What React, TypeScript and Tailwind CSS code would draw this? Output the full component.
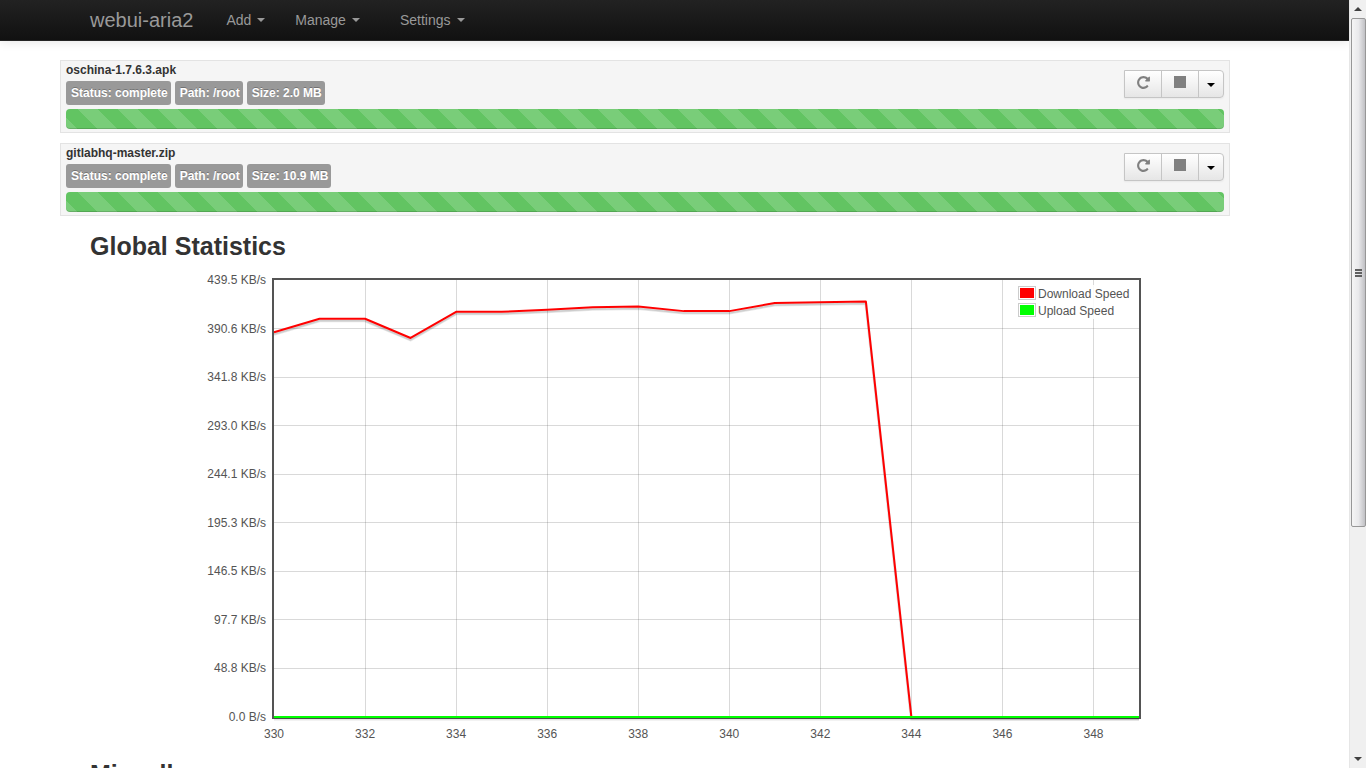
type Download = {
  name: string;
  status: string;
  path: string;
  size: string;
};

const downloads: Download[] = [
  { name: "oschina-1.7.6.3.apk", status: "complete", path: "/root", size: "2.0 MB" },
  { name: "gitlabhq-master.zip", status: "complete", path: "/root", size: "10.9 MB" },
];

const menus = [
  { label: "Add", style: "mr-[30px]" },
  { label: "Manage", style: "mr-10" },
  { label: "Settings", style: "" },
];

// Speeds in KB/s, one sample per tick starting at FIRST_TICK
const FIRST_TICK = 330;
const LAST_TICK = 349;
const MAX_SPEED = 439.5;
const downloadSpeed = [
  387, 400.5, 400.5, 381.2, 407.5, 407.5, 409.5, 412, 412.8, 408.2, 408.2, 416.4,
  417.2, 418, 0, 0, 0, 0, 0, 0,
];
const uploadSpeed = downloadSpeed.map(() => 0);
const speedLabels = [
  "439.5 KB/s",
  "390.6 KB/s",
  "341.8 KB/s",
  "293.0 KB/s",
  "244.1 KB/s",
  "195.3 KB/s",
  "146.5 KB/s",
  "97.7 KB/s",
  "48.8 KB/s",
  "0.0 B/s",
];
const tickLabels = [330, 332, 334, 336, 338, 340, 342, 344, 346, 348];

const plot = { left: 74, top: 10, width: 865, height: 437 };

const xAt = (tick: number) =>
  plot.left + ((tick - FIRST_TICK) / (LAST_TICK - FIRST_TICK)) * plot.width;
const yAt = (speed: number) =>
  plot.top + (1 - speed / MAX_SPEED) * plot.height;
const rowAt = (i: number) =>
  plot.top + (i / (speedLabels.length - 1)) * plot.height;

const toPoints = (values: number[]) =>
  values.map((v, i) => `${xAt(FIRST_TICK + i)},${yAt(v)}`).join(" ");

const Caret = ({ style }: { style: string }) => (
  <svg viewBox="0 0 8 4" className={`w-2 h-1 ${style}`} aria-hidden="true">
    <path d="M0 0h8L4 4z" fill="currentColor" />
  </svg>
);

const RepeatIcon = () => (
  <svg viewBox="0 0 1792 1792" className="w-[15px] h-[15px]" aria-hidden="true">
    <path
      fill="currentColor"
      d="M1664 256v448q0 26-19 45t-45 19h-448q-42 0-59-40-17-39 14-69l138-138q-148-137-349-137-104 0-198.5 40.5t-163.5 109.5-109.5 163.5-40.5 198.5 40.5 198.5 109.5 163.5 163.5 109.5 198.5 40.5q119 0 225-52t179-147q7-10 23-12 15 0 25 9l137 138q9 8 9.5 20.5t-7.5 22.5q-109 132-264 204.5t-327 72.5q-156 0-298-61t-245-164-164-245-61-298 61-298 164-245 245-164 298-61q147 0 284.5 55.5t244.5 156.5l130-129q29-31 70-14 39 17 39 59z"
    />
  </svg>
);

const StopIcon = () => (
  <svg viewBox="0 0 12 12" className="w-3 h-3" aria-hidden="true">
    <path d="M0 0h12v12H0z" fill="currentColor" />
  </svg>
);

const Navbar = () => (
  <nav className="flex items-center h-[41px] px-[90px] bg-linear-to-b from-[#222222] to-[#111111] border-b border-[#252525] shadow-[0_1px_10px_rgba(0,0,0,0.1)] text-[#999999]">
    <a href="#" className="text-xl leading-5 mr-[33px]">
      webui-aria2
    </a>
    {menus.map((menu) => (
      <button
        key={menu.label}
        type="button"
        className={`flex items-center text-sm leading-5 hover:text-white ${menu.style}`}
      >
        {menu.label}
        <Caret style="ml-1.5" />
      </button>
    ))}
  </nav>
);

const Badge = ({ text }: { text: string }) => (
  <span className="flex items-center h-6 pl-[5px] pr-[3px] rounded-[3px] bg-[#999999] text-white text-xs font-bold [text-shadow:0_-1px_0_rgba(0,0,0,0.25)]">
    {text}
  </span>
);

const DownloadRow = ({ item }: { item: Download }) => (
  <article className="bg-[#f5f5f5] border border-[#e3e3e3] px-[5px] pb-[3px] mb-2.5">
    <div className="flex justify-between items-start">
      <div>
        <h4 className="text-xs leading-[18px] mb-0.5 font-bold">{item.name}</h4>
        <div className="flex gap-1">
          <Badge text={`Status: ${item.status}`} />
          <Badge text={`Path: ${item.path}`} />
          <Badge text={`Size: ${item.size}`} />
        </div>
      </div>

      {/*Actions*/}
      <div className="flex h-7 mt-[9px] rounded-r-[4px] border border-[#c5c5c5] bg-linear-to-b from-white to-[#e6e6e6] text-[#808080] shadow-[0_1px_2px_rgba(0,0,0,0.05)]">
        <button
          type="button"
          aria-label="Restart"
          className="flex items-center justify-center w-9 pb-1"
        >
          <RepeatIcon />
        </button>
        <button
          type="button"
          aria-label="Stop"
          className="flex items-center justify-center w-[37px] pb-1 border-l border-[#c5c5c5]"
        >
          <StopIcon />
        </button>
        <button
          type="button"
          aria-label="More actions"
          className="flex items-center justify-center w-[25px] pt-0.5 border-l border-[#c5c5c5] text-black"
        >
          <Caret style="" />
        </button>
      </div>
    </div>

    {/*Progress*/}
    <div
      role="progressbar"
      aria-label={item.name}
      aria-valuenow={100}
      className="h-5 mt-1 rounded-[4px] bg-[#62c462] shadow-[inset_0_-1px_0_rgba(0,0,0,0.15)] bg-[linear-gradient(45deg,rgba(255,255,255,0.15)_25%,transparent_25%,transparent_50%,rgba(255,255,255,0.15)_50%,rgba(255,255,255,0.15)_75%,transparent_75%,transparent)] bg-size-[40px_40px] bg-[position:12px_0]"
    />
  </article>
);

const SpeedChart = () => (
  <svg
    viewBox="0 0 949 480"
    className="block w-full max-w-[949px] mx-auto mt-1 text-[12px]"
    role="img"
    aria-label="Download and upload speed"
  >
    {/*Grid*/}
    <g stroke="#545454" strokeOpacity="0.22" shapeRendering="crispEdges">
      {tickLabels.slice(1).map((tick) => (
        <line
          key={tick}
          x1={Math.floor(xAt(tick)) + 0.5}
          x2={Math.floor(xAt(tick)) + 0.5}
          y1={plot.top}
          y2={plot.top + plot.height}
        />
      ))}
      {speedLabels.slice(1, -1).map((label, i) => (
        <line
          key={label}
          x1={plot.left}
          x2={plot.left + plot.width}
          y1={Math.floor(rowAt(i + 1)) + 0.5}
          y2={Math.floor(rowAt(i + 1)) + 0.5}
        />
      ))}
    </g>
    <rect
      x={plot.left - 1}
      y={plot.top - 1}
      width={plot.width + 2}
      height={plot.height + 2}
      fill="none"
      stroke="#545454"
      strokeWidth="2"
    />

    {/*Series*/}
    <g fill="none" strokeLinejoin="round">
      <g stroke="#000000" strokeOpacity="0.1">
        <polyline
          points={toPoints(downloadSpeed)}
          strokeWidth="3"
          transform="translate(0 2)"
        />
        <polyline
          points={toPoints(downloadSpeed)}
          strokeWidth="1.5"
          transform="translate(0 2)"
        />
        <polyline
          points={toPoints(uploadSpeed)}
          strokeWidth="3"
          transform="translate(0 2)"
        />
      </g>
      <polyline points={toPoints(downloadSpeed)} stroke="#ff0000" strokeWidth="2" />
      <polyline points={toPoints(uploadSpeed)} stroke="#00ff00" strokeWidth="2" />
    </g>

    {/*Legend*/}
    <rect x="817" y="15" width="117" height="34" fill="#ffffff" fillOpacity="0.85" />
    <g fill="#ffffff" stroke="#cccccc">
      <rect x="818.5" y="16.5" width="17" height="13" />
      <rect x="818.5" y="33.5" width="17" height="13" />
    </g>
    <rect x="820" y="18" width="14" height="10" fill="#ff0000" />
    <rect x="820" y="35" width="14" height="10" fill="#00ff00" />

    <g fill="#545454">
      <text x="838" y="28">
        Download Speed
      </text>
      <text x="838" y="45">
        Upload Speed
      </text>
      {speedLabels.map((label, i) => (
        <text key={label} x="66" y={Math.round(rowAt(i)) + 4} textAnchor="end">
          {label}
        </text>
      ))}
      {tickLabels.map((tick) => (
        <text key={tick} x={xAt(tick)} y="468" textAnchor="middle">
          {tick}
        </text>
      ))}
    </g>
  </svg>
);

const ScrollBar = () => (
  <div
    className="flex flex-col items-center w-[17px] shrink-0 bg-[#f0f0f0] border-l border-[#e6e6e6] text-[#404040]"
    aria-hidden="true"
  >
    <div className="flex items-center justify-center h-[18px]">
      <Caret style="rotate-180" />
    </div>
    <div className="flex flex-col items-center justify-center gap-px w-[15px] h-[509px] rounded-[2px] border border-[#979797] bg-linear-to-r from-[#f5f5f5] via-[#e9e9eb] to-[#c0c0c4]">
      <span className="w-[7px] h-0.5 bg-[#606060]" />
      <span className="w-[7px] h-0.5 bg-[#606060]" />
      <span className="w-[7px] h-0.5 bg-[#606060]" />
    </div>
    <div className="flex items-center justify-center h-[18px] mt-auto">
      <Caret style="" />
    </div>
  </div>
);

const App = () => {
  return (
    <div className="flex h-screen overflow-hidden bg-white text-[#333333] font-['Liberation_Sans',Arial,sans-serif]">
      <div className="flex-1 min-w-0 overflow-hidden">
        <Navbar />
        <main className="px-[90px] pt-[19px]">
          <section className="-ml-[30px] mr-[29px]">
            {downloads.map((item) => (
              <DownloadRow key={item.name} item={item} />
            ))}
          </section>

          <section>
            <h3 className="text-[25px] leading-10 font-bold">Global Statistics</h3>
            <SpeedChart />
          </section>

          <section className="mt-1">
            <h3 className="text-[25px] leading-10 font-bold">Miscellaneous</h3>
          </section>
        </main>
      </div>
      <ScrollBar />
    </div>
  );
};

export default App;
